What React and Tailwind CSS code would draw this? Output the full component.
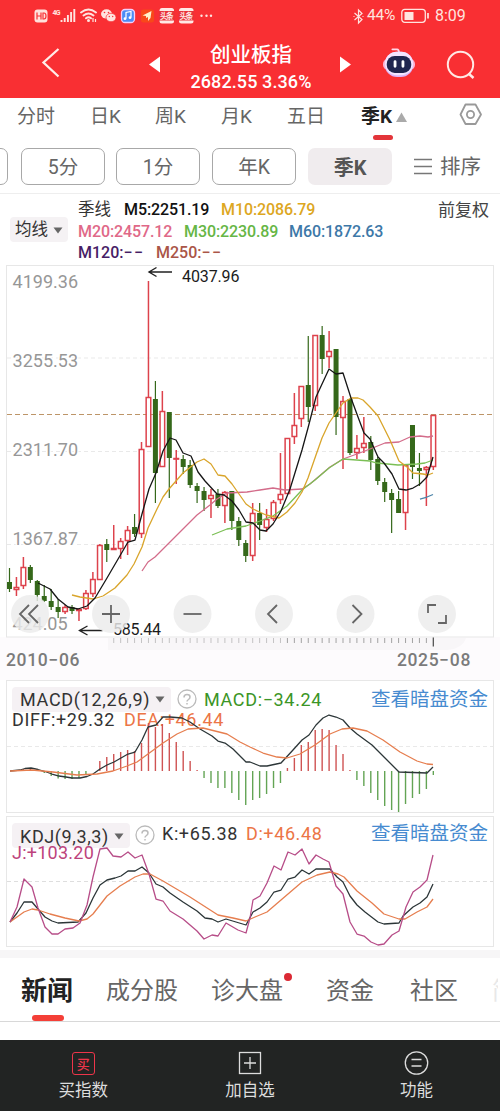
import React from "react";

const STEP = 6.948;
const xAt = (i) => 9.5 + STEP * i;

// [rising, high, bodyTop, bodyBottom, low]
const candles = [
  [0, 568, 582, 589, 592], [1, 577, 587, 590, 596], [1, 557, 567, 586, 589], [0, 565, 567, 580, 583],
  [0, 580, 581, 595, 601], [0, 585, 596, 601, 602], [0, 589, 601, 607, 610], [0, 599, 607, 612, 618],
  [1, 605, 607, 612, 614], [0, 605, 607, 611, 614], [1, 608, 609, 611, 621], [1, 590, 593, 609, 610],
  [1, 572, 579, 594, 597], [1, 544, 545, 580, 580], [0, 539, 544, 550, 562], [1, 525, 548, 550, 550],
  [1, 538, 541, 549, 559], [1, 526, 530, 541, 555], [0, 514, 527, 534, 537], [1, 442, 449, 534, 538],
  [1, 281, 397, 447, 447], [0, 381, 399, 473, 503], [1, 391, 411, 467, 467], [0, 412, 412, 458, 498],
  [1, 450, 458, 459, 484], [0, 455, 459, 467, 474], [0, 460, 465, 485, 488], [0, 483, 486, 491, 503],
  [0, 487, 491, 500, 511], [1, 489, 495, 499, 518], [0, 489, 494, 506, 508], [1, 491, 492, 506, 523],
  [0, 491, 491, 521, 530], [0, 517, 521, 540, 546], [0, 540, 543, 556, 562], [1, 503, 513, 556, 561],
  [0, 503, 513, 525, 540], [1, 509, 519, 528, 532], [1, 500, 502, 519, 521], [1, 453, 494, 500, 504],
  [1, 438, 438, 494, 494], [1, 393, 425, 437, 444], [1, 386, 386, 419, 427], [0, 336, 385, 407, 422],
  [1, 335, 335, 406, 411], [0, 326, 335, 359, 374], [1, 331, 351, 357, 368], [0, 349, 349, 417, 435],
  [1, 396, 401, 418, 469], [0, 399, 399, 453, 455], [1, 435, 448, 453, 459], [1, 417, 443, 448, 453],
  [0, 436, 442, 460, 470], [0, 457, 459, 481, 485], [0, 478, 482, 492, 502], [0, 489, 493, 500, 533],
  [0, 491, 499, 513, 513], [1, 465, 465, 513, 530], [0, 425, 425, 467, 479], [0, 453, 468, 471, 486],
  [1, 466, 467, 470, 506], [1, 415, 415, 467, 470],
];

const ma5 = "38,583 50,589 58,599 68,607 78,609 87,606 95,598 107,578 128,542 135,540 142,514 149,489 156,473 163,451 170,438 176,440 183,453 191,456 198,472 205,481 217,494 224,495 232,501 239,510 246,522 253,523 260,530 266,531 273,524 281,511 290,489 302,450 308,428 316,397 329,369 336,374 343,373 351,398 358,417 364,433 370,439 378,457 384,463 392,474 399,489 406,490 413,488 420,484 427,477 433,457";
const ma10 = "72,595 80,597 93,599 103,596 115,588 127,575 134,564 142,547 148,528 157,509 163,497 169,489 183,473 197,462 204,459 211,464 218,475 225,476 232,484 246,504 253,509 266,515 279,518 287,512 295,503 302,492 308,478 316,455 322,438 329,423 343,403 351,398 358,398 363,400 370,407 378,416 390,440 399,461 407,467 413,473 423,474 428,475 433,473";
const ma20 = "142,571 148,562 155,557 168,544 183,529 197,515 210,505 217,499 227,493 247,492 260,490 273,488 285,490 302,489 310,484 330,467 343,459 357,454 370,449 385,443 399,442 410,437 420,436 428,437 433,436";
const ma30 = "212,535 227,529 246,526 260,521 273,516 287,506 302,490 315,480 329,468 343,459 370,461 377,463 398,465 417,464 425,463 433,460";
const ma60 = "420,499 427,497 433,494.5";

// End of each histogram bar; the bars start from the zero line
const ZERO = 771;
const macdBars = [
  771, 770, 769, 769, 770, 773, 776, 778.5, 779, 779, 778, 774, 771, 761, 757, 754, 752, 750, 751, 743, 723, 727,
  724, 733, 742, 751, 761, 770, 778, 783, 788, 788, 793, 800, 805, 800, 798, 794, 788, 783, 768, 758, 745, 742,
  730, 729, 730, 745, 754, 770, 780, 786, 793, 800, 806, 810, 812, 804, 798, 794, 789, 775,
];
const diff = "10,771 20,770 25,768.5 31,768 38,769.5 45,771.5 52,774 59,776 66,777 72,778 80,778 87,776.5 93,774 100,769 107,765 114,762 121,758 128,754 135,752 142,740 148,727 156,725 163,717 170,717 182,718 190,722 200,729 212,736 218,741 225,743 233,749 246,762 250,762 260,766 267,766 281,763 293,750 302,740 309,735 316,725 323,718 329,715 336,717 343,720 350,728 357,734 372,745 385,758 399,772 427,773 433,767";
const dea = "10,771 32,770 53,772 77,775 97,774 113,771 127,766 137,762 148,754 163,743 177,734 188,729 203,728 227,734 240,742 250,747 263,753 277,757 287,758 300,754 315,745 330,734 342,729 353,728 367,731 383,740 400,752 417,761 427,764 433,764.5";
const kLine = "10,922 17,913 24,902 32,902 38,909 45,917 52,921 58,923 78,922 86,913 93,898 100,885 107,880 115,878 121,876 128,871 135,871 142,867 149,873 156,884 163,887 170,893 183,902 197,911 205,918 212,919 218,922 226,919 246,925 253,912 260,908 267,902 274,892 281,890 288,879 295,877 302,870 309,874 316,869 330,869 337,877 343,882 350,896 357,905 365,912 378,922 384,924 399,923 403,916 413,907 420,903 427,897 433,884";
const dLine = "10,922 24,912 32,909 38,910 50,914 65,918 79,921 87,919 93,914 107,896 120,886 135,877 143,874 150,874 163,881 190,897 218,915 233,918 246,921 255,917 267,912 281,900 302,882 317,875 330,872 338,874 344,877 357,891 372,903 384,914 399,919 405,919 417,912 427,907 433,899";
const jLine = "10,922 17,907 24,879 32,887 38,908 45,927 52,934 58,934 65,929 73,928 80,923 87,905 93,877 100,849 107,848 113,856 121,857 128,852 135,858 142,855 149,874 156,899 163,901 170,911 183,919 197,931 204,939 212,935 218,936 226,923 238,930 246,933 250,918 253,900 260,896 267,883 274,866 281,870 288,852 295,855 302,849 309,864 316,855 323,859 329,862 336,886 343,894 350,922 357,934 364,936 371,942 378,945 384,944 392,935 399,931 406,907 413,892 420,887 427,880 433,855";

function Curve({ points, color, width = 1.3 }) {
  return <polyline points={points} fill="none" stroke={color} strokeWidth={width} strokeLinejoin="round" />;
}

function StatusBar() {
  return (
    <div className="flex h-8 items-center pl-[34px] pr-[34px] text-[#ffe4df]">
      <svg width="182" height="20" viewBox="34 6 182 20" className="mr-auto shrink-0">
        <rect x="34.5" y="9.5" width="13" height="13" rx="3" fill="#ffe1dc" />
        <path d="M37 12.500v7M41 12.500v7M37 16h4M43 13v6h1q2 0 2-3t-2-3z" fill="none" stroke="#f92f33" strokeWidth="1.200" />
        <text x="52.500" y="14.500" fontSize="7" fontWeight="700" fontFamily="Roboto, sans-serif" fill="currentColor" textLength="8">4G</text>
        <path d="M61.500 22v-2M64.700 22v-4M67.900 22v-7M71.100 22v-10M74.300 22V9" stroke="currentColor" strokeWidth="1.900" />
        <g fill="none" stroke="currentColor" strokeWidth="1.900" strokeLinecap="round">
          <path d="M81 12.500q7.500-6 15 0M83.500 15.500q5-4 10 0M86 18.300q2.500-2 5 0" />
        </g>
        <circle cx="88.500" cy="20.500" r="1.500" fill="currentColor" />
        <path d="M93 18v4M95.500 19v3" stroke="currentColor" strokeWidth="1.200" />
        <ellipse cx="106.500" cy="14" rx="5.500" ry="4.700" fill="currentColor" />
        <ellipse cx="111" cy="17.500" rx="5" ry="4.200" fill="currentColor" stroke="#f92f33" strokeWidth=".7" />
        <g fill="#f92f33"><circle cx="104.500" cy="12.500" r=".8" /><circle cx="108.500" cy="12.500" r=".8" /><circle cx="109.300" cy="16.500" r=".7" /><circle cx="112.700" cy="16.500" r=".7" /></g>
        <rect x="121.500" y="9.500" width="13" height="13" rx="3.500" fill="#4b8df5" stroke="#f3cffa" strokeWidth="1.300" />
        <path d="M126 18.500v-6l5-1v6" fill="none" stroke="white" strokeWidth="1.200" /><circle cx="125" cy="18.700" r="1.400" fill="white" /><circle cx="130" cy="17.700" r="1.400" fill="white" />
        <rect x="141" y="9.500" width="13" height="13" rx="2.500" fill="#f8481a" />
        <path d="M142.500 15.500l9-4.500-1 7-2.500 3v-4l-2 1v-2z" fill="#fff2ca" />
        {[159.500, 179].map((x) => (
          <g key={x}>
            <rect x={x} y="8" width="14.500" height="15.500" rx="2.500" fill="#ffe9e5" />
            <rect x={x - 0.5} y="11" width="15.500" height="9.500" fill="#e9333a" />
            <text x={x + 0.5} y="18.700" fontSize="7.500" fontWeight="700" fontFamily="Noto Sans CJK SC, sans-serif" fill="#ffe9e5" textLength="13.500">头条</text>
          </g>
        ))}
        <g fill="currentColor"><circle cx="201.500" cy="15.700" r="1.200" /><circle cx="206.500" cy="15.700" r="1.200" /><circle cx="211" cy="15.700" r="1.200" /></g>
      </svg>
      <svg width="11" height="17" viewBox="0 0 11 17" className="mr-[3px]" fill="none" stroke="currentColor" strokeWidth="1.200">
        <path d="M1.500 5l7.500 6.500-3.500 3.500V2l3.500 3.500L1.500 12M.5 8.500h1M9.500 8.500h1" />
      </svg>
      <span className="w-[34px] text-[15.500px] tracking-[-0.2px]">44%</span>
      <svg width="29" height="16" viewBox="0 0 29 16" className="mr-[5px]">
        <rect x=".8" y="1.300" width="23.500" height="13" rx="3" fill="none" stroke="currentColor" strokeWidth="1.300" />
        <rect x="3.500" y="4" width="9" height="8" fill="currentColor" />
        <path d="M27 5v5.500" stroke="currentColor" strokeWidth="1.700" />
      </svg>
      <span className="w-[31px] text-[16px]">8:09</span>
    </div>
  );
}

function Header() {
  return (
    <header className="h-[98px] bg-[#f92f33] text-white">
      <StatusBar />
      <div className="flex h-[66px] items-center">
        <svg width="20" height="32" viewBox="0 0 20 32" className="ml-[41px] -mt-1" fill="none" stroke="#ffece8" strokeWidth="2.300"><path d="M17.500 2L2.500 15.500 17.500 29.500" /></svg>
        <svg width="12" height="18" viewBox="0 0 12 18" className="ml-[88px]"><path d="M0 8.500L11 .5v16z" fill="white" /></svg>
        <div className="ml-[20px] flex w-[140px] flex-col items-center pt-[3px]">
          <h1 className="font-['Noto_Sans_CJK_SC',sans-serif] text-[20.500px] font-medium leading-[31px]">创业板指</h1>
          <p className="whitespace-nowrap text-[18px] font-medium leading-[26px] tracking-[0.1px]">2682.55 3.36%</p>
        </div>
        <svg width="12" height="18" viewBox="0 0 12 18" className="ml-[19px]"><path d="M11 8.500L0 .5v16z" fill="white" /></svg>
        <svg width="34" height="32" viewBox="0 0 36 34" className="ml-[30px] -mt-1">
          <path d="M11 2.500h5q2 0 2 4" fill="none" stroke="#ffd7e8" strokeWidth="2" strokeLinecap="round" />
          <rect x="1" y="13" width="34" height="11" rx="5" fill="#fbb5d5" />
          <rect x="3" y="5" width="30" height="27" rx="13" fill="#dcb5fa" />
          <rect x="3" y="5" width="30" height="25" rx="12.500" fill="#f3e4ff" />
          <rect x="5" y="9.500" width="26" height="18" rx="8.500" fill="#20264f" />
          <path d="M13.800 15.500v5M22.200 15.500v5" stroke="white" strokeWidth="3" strokeLinecap="round" />
        </svg>
        <svg width="30" height="30" viewBox="0 0 30 30" className="ml-[30px]" fill="none" stroke="#ffe9e5" strokeWidth="2"><circle cx="14.500" cy="14.500" r="12.700" /><path d="M22.500 23.500l5 4.500" strokeWidth="2.500" /></svg>
      </div>
    </header>
  );
}

function PeriodTabs() {
  return (
    <nav className="flex h-[50px] items-start pt-[5px] font-[Roboto,'Noto_Sans_CJK_SC',sans-serif] text-[19px] leading-[28px] text-[#666]">
      <span className="ml-[17px] w-[73px]">分时</span>
      <span className="w-[65px]">日K</span>
      <span className="w-[66px]">周K</span>
      <span className="w-[66px]">月K</span>
      <span className="w-[74px]">五日</span>
      <span className="flex w-[98px] flex-col text-[19px] font-bold text-[#222]">
        <span className="flex items-center">季K<svg width="11" height="10" viewBox="0 0 11 10" className="ml-1"><path d="M5.500.5L11 10H0z" fill="#aaa" /></svg></span>
        <i className="ml-3 mt-[4px] h-[5px] w-5 rounded-full bg-[#e3353a]" />
      </span>
      <svg width="24" height="24" viewBox="0 0 24 24" fill="none" stroke="#999" strokeWidth="1.800">
        <path d="M6.500 1.500h10L22 11.500l-5.500 9.500h-10L1.500 11.500z" strokeLinejoin="round" /><circle cx="11.500" cy="11.500" r="3.600" />
      </svg>
    </nav>
  );
}

const pill = "flex h-[37px] w-[84px] shrink-0 items-center justify-center rounded-[7px] pt-0.5";

function PeriodPills() {
  return (
    <div className="flex h-[46px] items-start overflow-hidden border-b border-[#eee] font-[Roboto,'Noto_Sans_CJK_SC',sans-serif] text-[19.500px] text-[#666]">
      <div className={pill + " -ml-[76px] border border-[#a8a8a8]"} />
      <div className={pill + " ml-[13px] border border-[#a8a8a8]"}>5分</div>
      <div className={pill + " ml-[11px] border border-[#a8a8a8]"}>1分</div>
      <div className={pill + " ml-[12px] border border-[#a8a8a8]"}>年K</div>
      <div className={pill + " ml-[12px] bg-[#f0ecee] text-[20px] font-bold text-[#555]"}>季K</div>
      <svg width="18" height="18" viewBox="0 0 18 18" className="ml-[22px] mt-[10px] shrink-0" stroke="#777" strokeWidth="1.700"><path d="M0 1.500h18M0 8.500h18M0 15.500h18" /></svg>
      <span className="ml-2 mt-[5px] whitespace-nowrap text-[20.500px] leading-[29px] text-[#666]">排序</span>
    </div>
  );
}

function Caret() {
  return <svg width="10" height="7" viewBox="0 0 10 7" className="shrink-0"><path d="M.5.5h9L5 6.500z" fill="#666" /></svg>;
}

function MaLegend() {
  return (
    <section className="flex h-[70px] font-[Roboto,'Noto_Sans_CJK_SC',sans-serif] text-[16px] leading-[21.500px]">
      <button className="ml-2.5 mt-[23px] flex h-[25px] w-[58px] items-center rounded bg-[#f5f2f4] pl-[5px] pr-[5px] pt-px text-[16.500px] text-[#333]">
        <span className="mr-auto whitespace-nowrap">均线</span><Caret />
      </button>
      <div className="ml-[10px] mt-[5px] w-[350px] whitespace-nowrap font-medium">
        <p className="flex tracking-[-0.1px]"><span className="w-[46px] text-[16.500px] font-normal text-[#333]">季线</span><span className="w-[97px] text-[#111]">M5:2251.19</span><span className="text-[#dda71f]">M10:2086.79</span></p>
        <p className="flex tracking-[-0.1px]"><span className="w-[106px] text-[#e06888]">M20:2457.12</span><span className="w-[105px] text-[#66b645]">M30:2230.89</span><span className="text-[#3d78a8]">M60:1872.63</span></p>
        <p className="flex"><span className="flex w-[78px] text-[#471d66]">M120:<span className="tracking-[1.500px]">−−</span></span><span className="flex text-[#aa5547]">M250:<span className="tracking-[1.500px]">−−</span></span></p>
      </div>
      <span className="mt-[6px] whitespace-nowrap pl-[10px] text-[17px] text-[#444]">前复权</span>
    </section>
  );
}

const axisLabels = [["4199.36", 287.500, 65.5], ["3255.53", 367, 65.5], ["2311.70", 456, 65.5], ["1367.87", 544.700, 65.5], ["424.05", 629.700, 55]];
const controls = [
  [30, "M-1-9L-10 0-1 9M8-9L-1 0 8 9"],
  [111, "M-9 0H9M0-9V9"],
  [192.500, "M-9 0H9"],
  [274, "M3-9L-6 0 3 9"],
  [355.500, "M-3-9L6 0-3 9"],
  [437, "M-1-9H-9V-1M1 9H9V1"],
];

function PriceChart() {
  return (
    <section className="bg-[#fdfbfd]">
      <svg width="500" height="386" viewBox="0 264 500 386" className="block font-[Roboto,sans-serif]">
        <rect x="0" y="264" width="500" height="373" fill="white" />
        <path d="M108 638H466Q462 652 435 650H108Z" fill="#f8f6f8" />
        <rect x="6.500" y="265.500" width="487" height="371.500" fill="none" stroke="#e7e7e7" strokeWidth="1" />
        <path d="M7 358H493M7 451.500H493M7 544.500H493" stroke="#e9e9e9" strokeDasharray="4 3" />
        <g fontSize="18" fill="#979797">
          {axisLabels.map(([t, y, w]) => (
            <text key={t} x="12.500" y={y} textLength={w} stroke="white" strokeWidth="3" paintOrder="stroke">{t}</text>
          ))}
        </g>
        <path d="M7 414.500H493" stroke="#bd9568" strokeDasharray="5 3" />
        {candles.map(([up, hi, top, bot, low], i) => {
          const x = xAt(i);
          return up ? (
            <g key={i} stroke="#dd424c" strokeWidth="1.500">
              <path d={`M${x} ${hi}V${top}M${x} ${bot}V${low}`} />
              <rect x={x - 2.3} y={top + 0.5} width="4.600" height={Math.max(bot - top - 1, 0.6)} fill="white" />
            </g>
          ) : (
            <g key={i} fill="#35681a" stroke="#35681a">
              <path d={`M${x} ${hi}V${low}`} strokeWidth="1.200" />
              <rect x={x - 2.5} y={top} width="5" height={bot - top} stroke="none" />
            </g>
          );
        })}
        <Curve points={ma20} color="#d36c8a" />
        <Curve points={ma30} color="#7bbf55" />
        <Curve points={ma60} color="#4b83a8" />
        <Curve points={ma10} color="#d9a52b" />
        <Curve points={ma5} color="#161616" />
        <g fill="none" stroke="#222" strokeWidth="1.400">
          <path d="M172 272H149M156.500 267.500L149 272l7.500 4.500M102.500 630.500H79.500M87.500 626L79.500 630.500l8 4.500" />
        </g>
        <g fontSize="16" fill="#1b1b1b">
          <text x="182" y="281.700" textLength="57.500">4037.96</text>
          <text x="113" y="634.700" textLength="48">585.44</text>
        </g>
        {controls.map(([x, d]) => (
          <g key={x} transform={`translate(${x} 614)`}>
            <circle r="19" fill="#ebebeb" fillOpacity=".82" />
            <path d={d} fill="none" stroke="#666" strokeWidth="1.800" />
          </g>
        ))}
        {candles.map((c, i) => i > 14 && i < 61 && (
          <path key={i} d={`M${xAt(i)} 638v5`} stroke="#999" strokeOpacity={i < 40 ? 0.55 : 0.9} />
        ))}
        <path d={`M${xAt(61)} 637.500v9`} stroke="#555" strokeWidth="1.300" />
      </svg>
      <div className="flex h-[30px] justify-between pl-[6px] pr-[29px] text-[17.500px] font-medium leading-[20px] tracking-[0.65px] text-[#7b7b7b]">
        <span>2010−06</span><span>2025−08</span>
      </div>
    </section>
  );
}

function Help() {
  return (
    <svg width="20" height="20" viewBox="0 0 20 20" className="shrink-0" fill="none" stroke="#bbb" strokeWidth="1.300">
      <circle cx="10" cy="10" r="9" /><path d="M7 8.500Q7 5.500 10 5.500t3 2.500q0 1.500-1.500 2.500T10 12.500" strokeWidth="1.500" /><circle cx="10" cy="14.800" r=".5" fill="#bbb" strokeWidth=".8" />
    </svg>
  );
}

function DarkFundsLink() {
  return <a className="whitespace-nowrap text-[19.500px] leading-[27px] text-[#478bd0]">查看暗盘资金</a>;
}

const panel = "relative mx-[6px] border border-[#e7e7e7] bg-white font-[Roboto,'Noto_Sans_CJK_SC',sans-serif] text-[18px]";

function MacdPanel() {
  return (
    <section className={panel + " h-[133px]"}>
      <div className="flex h-[32px] items-center pl-[5px] pr-[5px] pt-[5px]">
        <div className="flex h-[25px] w-[159px] items-center rounded bg-[#f5f1f4] pl-2 pr-[6px] text-[#333]"><span className="mr-auto whitespace-nowrap tracking-[0.7px]">MACD(12,26,9)</span><Caret /></div>
        <span className="ml-[6px] -mt-px"><Help /></span>
        <span className="ml-[7px] mr-auto whitespace-nowrap tracking-[0.65px] text-[#3b9526]">MACD:−34.24</span>
        <DarkFundsLink />
      </div>
      <div className="-mt-[3px] flex whitespace-nowrap pl-[5px] leading-[20px]">
        <span className="w-[112px] tracking-[0.6px] text-[#333]">DIFF:+29.32</span><span className="tracking-[0.65px] text-[#ec7546]">DEA:+46.44</span>
      </div>
      <svg width="487" height="133" viewBox="6 680 487 133" className="absolute -left-px -top-px">
        <path d="M7 746.500H493" stroke="#e9e9e9" strokeDasharray="4 3" />
        {macdBars.map((y, i) => <path key={i} d={`M${xAt(i)} ${ZERO}V${y}`} stroke={y < ZERO ? "#cf5353" : "#63a454"} strokeWidth="1.400" />)}
        <Curve points={diff} color="#2c3638" />
        <Curve points={dea} color="#e67e4f" />
      </svg>
    </section>
  );
}

function KdjPanel() {
  return (
    <section className={panel + " mt-[3px] h-[131px]"}>
      <div className="flex h-[32px] items-center pl-[5px] pr-[5px] pt-[4px]">
        <div className="flex h-[25px] w-[118px] items-center rounded bg-[#f5f1f4] pl-2 pr-[6px] pt-0.5 text-[#333]"><span className="mr-auto whitespace-nowrap tracking-[0.6px]">KDJ(9,3,3)</span><Caret /></div>
        <span className="ml-[5px]"><Help /></span>
        <span className="ml-[7px] w-[84px] whitespace-nowrap pb-1 tracking-[0.6px] text-[#333]">K:+65.38</span>
        <span className="mr-auto whitespace-nowrap pb-1 tracking-[0.6px] text-[#ec7546]">D:+46.48</span>
        <span className="-mt-1"><DarkFundsLink /></span>
      </div>
      <p className="-mt-[6px] pl-[5px] leading-[20px] tracking-[0.25px] text-[#bd437c]">J:+103.20</p>
      <svg width="487" height="131" viewBox="6 816 487 131" className="absolute -left-px -top-px">
        <path d="M7 881.500H493" stroke="#dedede" strokeDasharray="4 3" />
        <Curve points={kLine} color="#2c3638" />
        <Curve points={dLine} color="#e67e4f" />
        <Curve points={jLine} color="#b74d88" />
      </svg>
    </section>
  );
}

function ContentTabs() {
  return (
    <nav className="mt-[3px] flex h-[72px] items-start whitespace-nowrap border-b border-t-[8px] border-b-[#d8d8d8] border-t-[#f7f6f7] bg-white pt-[13px] font-['Noto_Sans_CJK_SC',sans-serif] text-[24px] leading-[36px] text-[#666]">
      <div className="ml-[21px] w-[85px] text-[26px] font-bold text-[#222]">新闻<i className="ml-[11px] mt-[8px] block h-[6px] w-8 rounded-full bg-[#f43f37]" /></div>
      <span className="w-[105px]">成分股</span>
      <span className="relative w-[115px]">诊大盘<i className="absolute left-[73px] top-[2px] size-2 rounded-full bg-[#db2934]" /></span>
      <span className="w-[84px]">资金</span>
      <span className="w-[82px]">社区</span>
      <span className="h-9 w-[6px] overflow-hidden text-[#e8e8e8]">简</span>
    </nav>
  );
}

function BottomBar() {
  const item = "flex w-[166.600px] flex-col items-center gap-px pt-[10px]";
  return (
    <footer className="mt-[18px] flex h-[72px] bg-[#222423] font-['Noto_Sans_CJK_SC',sans-serif] text-[16.500px] leading-[26px] text-[#ddd]">
      <div className={item}><span className="mt-[2px] flex size-[23px] items-center justify-center rounded-[3px] border border-[#ee354a] text-[13px] font-medium leading-none text-[#ee354a]">买</span><span>买指数</span></div>
      <div className={item}><svg width="24" height="25" viewBox="0 0 24 25" fill="none" stroke="#ddd" strokeWidth="1.300"><rect x="1.500" y="2.500" width="21" height="21" /><path d="M6 13h12M12 7v12" /></svg><span>加自选</span></div>
      <div className={item}><svg width="25" height="25" viewBox="0 0 25 25" fill="none" stroke="#ddd" strokeWidth="1.300"><circle cx="12.500" cy="13" r="11.200" /><path d="M7.500 9.500h10M7.500 16h10" /></svg><span>功能</span></div>
    </footer>
  );
}

export default function App() {
  return (
    <main className="h-[1111px] w-[500px] overflow-hidden bg-white font-[Roboto,'Noto_Sans_CJK_SC',sans-serif]">
      <Header />
      <PeriodTabs />
      <PeriodPills />
      <MaLegend />
      <PriceChart />
      <MacdPanel />
      <KdjPanel />
      <ContentTabs />
      <BottomBar />
    </main>
  );
}
